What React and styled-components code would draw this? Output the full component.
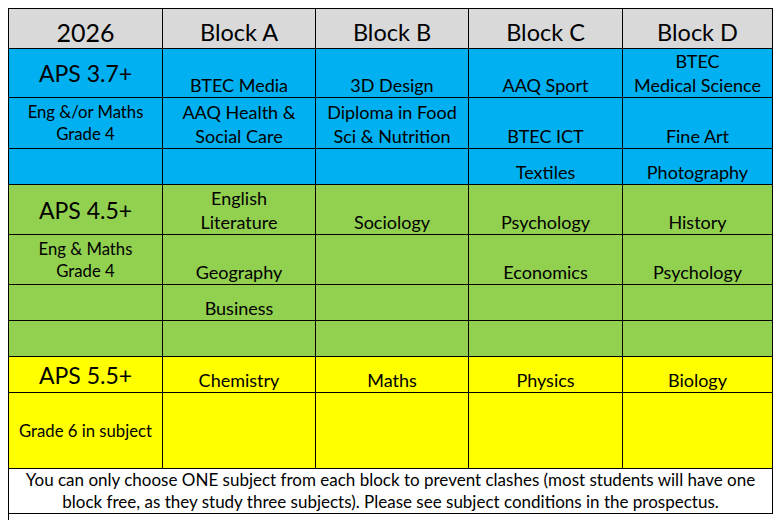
import React from "react";
import styled, { createGlobalStyle } from "styled-components";

const Global = createGlobalStyle`
  html, body { margin: 0; padding: 0; background: #ffffff; }
  body { font-family: Lato, "Liberation Sans", sans-serif; color: #000; }
`;

const Page = styled.div`
  padding: 8px 0 0 8px;
`;

const Grid = styled.div`
  display: grid;
  width: max-content;
  grid-template-columns: 153px 152px 152px 153px 149px;
  grid-template-rows: 39px 48px 50px 35px 49px 49px 35px 35px 35px 75px 44px;
  gap: 1px;
  padding: 1px;
  background: #000;
`;

const tones = {
  head: "#d9d9d9",
  blue: "#00b0f0",
  green: "#92d050",
  yellow: "#ffff00",
  white: "#ffffff",
};

const Cell = styled.div`
  background: ${(p) => tones[p.$tone]};
  display: flex;
  flex-direction: column;
  align-items: center;
  justify-content: ${(p) => (p.$center ? "center" : "flex-end")};
  text-align: center;
  font-size: ${(p) => p.$size || 18}px;
  line-height: ${(p) => p.$lh || 24}px;
  padding-bottom: ${(p) => p.$pb ?? 0}px;
  white-space: nowrap;
  overflow: hidden;
`;

const Footer = styled(Cell)`
  grid-column: 1 / -1;
`;

const Edge = styled.div`
  width: 1px;
  height: 7px;
  background: #000;
`;

const header = ["2026", "Block A", "Block B", "Block C", "Block D"];

const rows = [
  { tone: "blue", label: "APS 3.7+", big: true, cells: ["BTEC Media", "3D Design", "AAQ Sport", ["BTEC", "Medical Science"]] },
  { tone: "blue", label: ["Eng &/or Maths", "Grade 4"], cells: [["AAQ Health &", "Social Care"], ["Diploma in Food", "Sci & Nutrition"], "BTEC ICT", "Fine Art"] },
  { tone: "blue", label: "", cells: ["", "", "Textiles", "Photography"] },
  { tone: "green", label: "APS 4.5+", big: true, cells: [["English", "Literature"], "Sociology", "Psychology", "History"] },
  { tone: "green", label: ["Eng & Maths", "Grade 4"], cells: ["Geography", "", "Economics", "Psychology"] },
  { tone: "green", label: "", cells: ["Business", "", "", ""] },
  { tone: "green", label: "", cells: ["", "", "", ""] },
  { tone: "yellow", label: "APS 5.5+", big: true, cells: ["Chemistry", "Maths", "Physics", "Biology"] },
  { tone: "yellow", label: "Grade 6 in subject", cells: ["", "", "", ""] },
];

const Lines = ({ value }) =>
  Array.isArray(value) ? value.map((v, i) => <span key={i}>{v}</span>) : <span>{value}</span>;

export default function App() {
  return (
    <Page>
      <Global />
      <Grid>
        {header.map((h, i) => (
          <Cell key={h} $tone="head" $size={i === 0 ? 25 : 23.5} $lh={28} $pb={2}>
            {h}
          </Cell>
        ))}
        {rows.map((r, ri) => (
          <React.Fragment key={ri}>
            <Cell $tone={r.tone} $center $size={r.big ? 23 : 16.7} $lh={r.big ? 28 : 22}>
              <Lines value={r.label} />
            </Cell>
            {r.cells.map((c, ci) => (
              <Cell key={ci} $tone={r.tone}>
                <Lines value={c} />
              </Cell>
            ))}
          </React.Fragment>
        ))}
        <Footer $tone="white" $center $size={17} $lh={22}>
          <Lines
            value={[
              "You can only choose ONE subject from each block to prevent clashes (most students will have one",
              "block free, as they study three subjects). Please see subject conditions in the prospectus.",
            ]}
          />
        </Footer>
      </Grid>
      <Edge />
    </Page>
  );
}
